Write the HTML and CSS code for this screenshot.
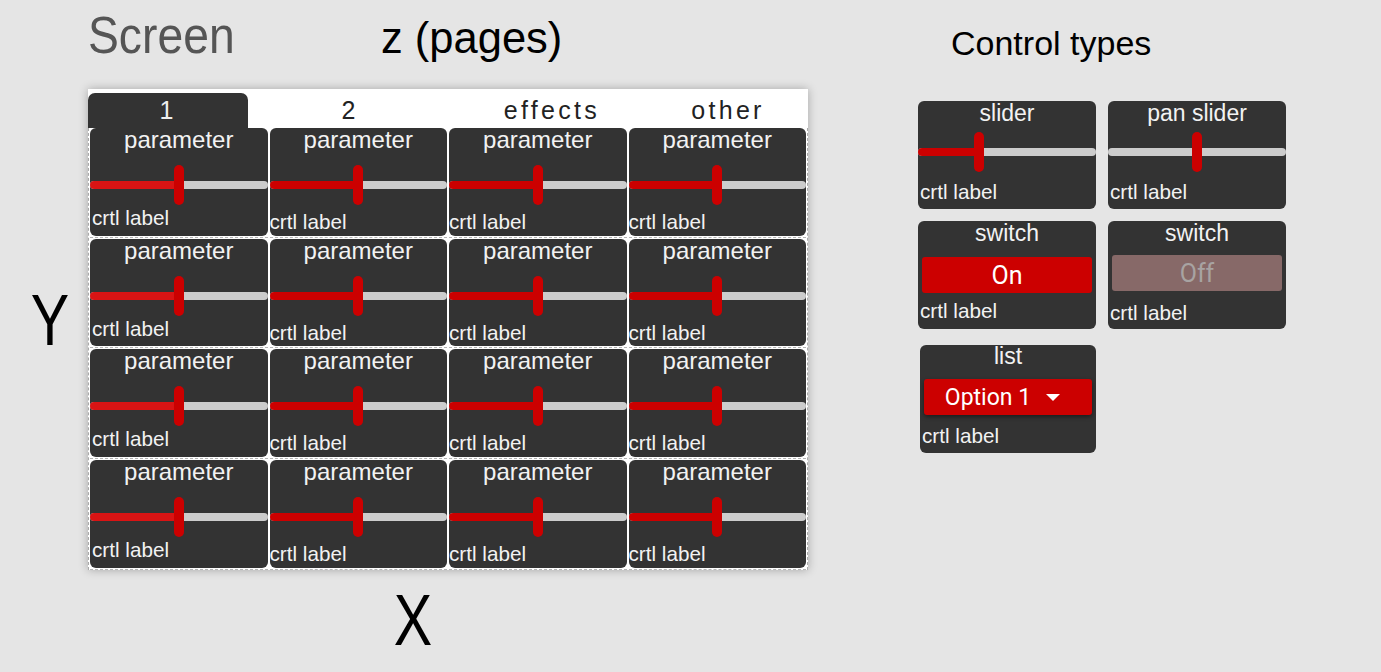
FILE: index.html
```html
<!DOCTYPE html>
<html lang="en">
<head>
    <meta charset="UTF-8">
    <meta name="viewport" content="width=device-width, initial-scale=1.0">
    <title>Screen layout</title>
    <link rel="stylesheet" href="styles.css">
</head>
<body>
<div class="page">
    <div class="diagram">
        <div class="head">
            <div class="screen-title">Screen</div>
            <div class="z-title">z (pages)</div>
        </div>
        <div class="axis-y">Y</div>
        <div class="panel">
            <div class="tabs">
                <div class="tab active tab-1">1</div>
                <div class="tab tab-2">2</div>
                <div class="tab tab-3">effects</div>
                <div class="tab tab-4">other</div>
            </div>
            <div class="grid">
                <!-- row 1 -->
                <div class="slot"><div class="ctl first">
                    <div class="ctl-title">parameter</div>
                    <div class="slider"><div class="track"><span class="fill hot" style="width:50%"></span></div><span class="thumb" style="left:50%"></span></div>
                    <div class="ctl-label">crtl label</div>
                </div></div>
                <div class="slot"><div class="ctl">
                    <div class="ctl-title">parameter</div>
                    <div class="slider"><div class="track"><span class="fill" style="width:50%"></span></div><span class="thumb" style="left:50%"></span></div>
                    <div class="ctl-label">crtl label</div>
                </div></div>
                <div class="slot"><div class="ctl">
                    <div class="ctl-title">parameter</div>
                    <div class="slider"><div class="track"><span class="fill" style="width:50%"></span></div><span class="thumb" style="left:50%"></span></div>
                    <div class="ctl-label">crtl label</div>
                </div></div>
                <div class="slot"><div class="ctl">
                    <div class="ctl-title">parameter</div>
                    <div class="slider"><div class="track"><span class="fill" style="width:50%"></span></div><span class="thumb" style="left:50%"></span></div>
                    <div class="ctl-label">crtl label</div>
                </div></div>
                <!-- row 2 -->
                <div class="slot"><div class="ctl first">
                    <div class="ctl-title">parameter</div>
                    <div class="slider"><div class="track"><span class="fill hot" style="width:50%"></span></div><span class="thumb" style="left:50%"></span></div>
                    <div class="ctl-label">crtl label</div>
                </div></div>
                <div class="slot"><div class="ctl">
                    <div class="ctl-title">parameter</div>
                    <div class="slider"><div class="track"><span class="fill" style="width:50%"></span></div><span class="thumb" style="left:50%"></span></div>
                    <div class="ctl-label">crtl label</div>
                </div></div>
                <div class="slot"><div class="ctl">
                    <div class="ctl-title">parameter</div>
                    <div class="slider"><div class="track"><span class="fill" style="width:50%"></span></div><span class="thumb" style="left:50%"></span></div>
                    <div class="ctl-label">crtl label</div>
                </div></div>
                <div class="slot"><div class="ctl">
                    <div class="ctl-title">parameter</div>
                    <div class="slider"><div class="track"><span class="fill" style="width:50%"></span></div><span class="thumb" style="left:50%"></span></div>
                    <div class="ctl-label">crtl label</div>
                </div></div>
                <!-- row 3 -->
                <div class="slot"><div class="ctl first">
                    <div class="ctl-title">parameter</div>
                    <div class="slider"><div class="track"><span class="fill hot" style="width:50%"></span></div><span class="thumb" style="left:50%"></span></div>
                    <div class="ctl-label">crtl label</div>
                </div></div>
                <div class="slot"><div class="ctl">
                    <div class="ctl-title">parameter</div>
                    <div class="slider"><div class="track"><span class="fill" style="width:50%"></span></div><span class="thumb" style="left:50%"></span></div>
                    <div class="ctl-label">crtl label</div>
                </div></div>
                <div class="slot"><div class="ctl">
                    <div class="ctl-title">parameter</div>
                    <div class="slider"><div class="track"><span class="fill" style="width:50%"></span></div><span class="thumb" style="left:50%"></span></div>
                    <div class="ctl-label">crtl label</div>
                </div></div>
                <div class="slot"><div class="ctl">
                    <div class="ctl-title">parameter</div>
                    <div class="slider"><div class="track"><span class="fill" style="width:50%"></span></div><span class="thumb" style="left:50%"></span></div>
                    <div class="ctl-label">crtl label</div>
                </div></div>
                <!-- row 4 -->
                <div class="slot"><div class="ctl first">
                    <div class="ctl-title">parameter</div>
                    <div class="slider"><div class="track"><span class="fill hot" style="width:50%"></span></div><span class="thumb" style="left:50%"></span></div>
                    <div class="ctl-label">crtl label</div>
                </div></div>
                <div class="slot"><div class="ctl">
                    <div class="ctl-title">parameter</div>
                    <div class="slider"><div class="track"><span class="fill" style="width:50%"></span></div><span class="thumb" style="left:50%"></span></div>
                    <div class="ctl-label">crtl label</div>
                </div></div>
                <div class="slot"><div class="ctl">
                    <div class="ctl-title">parameter</div>
                    <div class="slider"><div class="track"><span class="fill" style="width:50%"></span></div><span class="thumb" style="left:50%"></span></div>
                    <div class="ctl-label">crtl label</div>
                </div></div>
                <div class="slot"><div class="ctl">
                    <div class="ctl-title">parameter</div>
                    <div class="slider"><div class="track"><span class="fill" style="width:50%"></span></div><span class="thumb" style="left:50%"></span></div>
                    <div class="ctl-label">crtl label</div>
                </div></div>
            </div>
        </div>
        <div class="axis-x">X</div>
    </div>

    <div class="types">
        <h2 class="types-title">Control types</h2>
        <div class="type-grid">
            <div class="card card-slider">
                <div class="ctl-title">slider</div>
                <div class="slider"><div class="track"><span class="fill" style="width:34%"></span></div><span class="thumb" style="left:34%"></span></div>
                <div class="ctl-label">crtl label</div>
            </div>
            <div class="card card-slider">
                <div class="ctl-title">pan slider</div>
                <div class="slider"><div class="track"></div><span class="thumb" style="left:50%"></span></div>
                <div class="ctl-label">crtl label</div>
            </div>
            <div class="card card-on">
                <div class="ctl-title">switch</div>
                <div class="btn on">On</div>
                <div class="ctl-label">crtl label</div>
            </div>
            <div class="card card-off">
                <div class="ctl-title">switch</div>
                <div class="btn off">Off</div>
                <div class="ctl-label">crtl label</div>
            </div>
            <div class="card card-list">
                <div class="ctl-title">list</div>
                <div class="btn dropdown"><span>Option 1</span><span class="caret"></span></div>
                <div class="ctl-label">crtl label</div>
            </div>
        </div>
    </div>
</div>
</body>
</html>
```

FILE: styles.css
```css
body {
    margin: 0;
    background-color: #e5e5e5;
    font-family: "Liberation Sans", Arial, sans-serif;
    color: #000;
}
.page {
    display: flex;
    align-items: flex-start;
}

/* left: screen diagram */
.diagram {
    display: grid;
    grid-template-columns: 88px 720px;
    grid-template-rows: 89px 481px auto;
}
.head {
    grid-column: 2;
    display: flex;
    align-items: baseline;
    padding-top: 9px;
}
.screen-title {
    width: 293px;
    font-size: 52px;
    line-height: 52px;
    color: #555;
    transform: scaleX(0.89);
    transform-origin: left;
}
.z-title {
    font-size: 43.5px;
    line-height: 52px;
}
.axis-y {
    grid-column: 1;
    grid-row: 2;
    display: flex;
    align-items: center;
    justify-content: center;
    padding: 0 0 19px 10px;
    font-size: 72px;
    line-height: 1;
    transform: scaleX(0.8);
    transform-origin: 54px 50%;
}
.axis-x {
    grid-column: 2;
    grid-row: 3;
    padding: 14px 70px 0 0;
    text-align: center;
    font-size: 72px;
    line-height: 1;
    transform: scaleX(0.8);
    transform-origin: 325px 0;
}

.panel {
    grid-column: 2;
    grid-row: 2;
    display: flex;
    flex-direction: column;
    background: #fff;
    box-shadow: 0 0 9px rgba(0, 0, 0, 0.28);
}
.tabs {
    height: 39px;
    display: flex;
    align-items: flex-end;
}
.tab {
    height: 35px;
    line-height: 35px;
    text-align: center;
    font-size: 25px;
    letter-spacing: 3.3px;
    color: #222;
}
.tab.active {
    background: #333;
    color: #eee;
    border-radius: 7px 7px 0 0;
}
.tab-1 { width: 160px; }
.tab-2 { width: 204px; }
.tab-3 { width: 200px; }
.tab-4 { width: 156px; padding-right: 4px; box-sizing: border-box; }

.grid {
    flex: 1;
    display: grid;
    grid-template-columns: repeat(4, 1fr);
    grid-template-rows: repeat(4, 1fr);
    column-gap: 2px;
    padding: 0 1px;
    border-left: 1px dashed #aaa;
    border-right: 1px dashed #aaa;
}
.slot {
    display: flex;
    padding-bottom: 1px;
    border-bottom: 1px dashed #b5b5b5;
    margin-bottom: 1px;
}
.slot:nth-last-child(-n+4) {
    margin-bottom: 0;
}

/* controls */
.ctl, .card {
    flex: 1;
    display: flex;
    flex-direction: column;
    background: #333;
    border-radius: 6px;
    color: #f2f2f2;
}
.ctl-title {
    font-size: 23px;
    line-height: 24px;
    text-align: center;
}
.ctl .ctl-title {
    font-size: 24px;
}
.ctl-label {
    font-size: 20.7px;
    line-height: 22px;
    padding-left: 2px;
}
.ctl .slider { margin-top: 13px; }
.ctl .ctl-label {
    margin-top: 6px;
    padding-left: 0;
}
.ctl.first .ctl-label {
    margin-top: 2px;
    padding-left: 2px;
}

.slider {
    position: relative;
    height: 40px;
}
.track {
    position: absolute;
    left: 0;
    right: 0;
    top: 16px;
    height: 8px;
    border-radius: 4px;
    background: #ccc;
    overflow: hidden;
}
.fill {
    display: block;
    height: 100%;
    background: #c00;
}
.fill.hot {
    background: #d91414;
}
.thumb {
    position: absolute;
    top: 0;
    width: 10px;
    height: 40px;
    margin-left: -5px;
    border-radius: 5px;
    background: #c00;
}

/* right: control types */
.types {
    margin-left: 110px;
}
.types-title {
    margin: 0;
    height: 101px;
    padding: 26px 0 0 33px;
    box-sizing: border-box;
    font-size: 34px;
    line-height: 34px;
    font-weight: normal;
}
.type-grid {
    display: grid;
    grid-template-columns: 178px 178px;
    grid-auto-rows: 108px;
    gap: 12px;
    align-items: start;
}
.card {
    height: 108px;
}
.card-slider .slider { margin-top: 7px; }
.card-slider .ctl-label { margin-top: 9px; }

.btn {
    margin: 0 4px;
    height: 36px;
    border-radius: 3px;
    display: flex;
    align-items: center;
    justify-content: center;
    font-family: Roboto, "Liberation Sans", sans-serif;
    font-size: 25px;
}
.btn.on {
    margin-top: 12px;
    background: #c00;
    color: #fff;
}
.card-on .ctl-label { margin-top: 7px; }
.btn.off {
    margin-top: 10px;
    background: #876968;
    color: #a8a3a2;
}
.card-off .ctl-label { margin-top: 11px; }

.card-list {
    margin: 4px 0 0 2px;
}
.card-list .ctl-title { line-height: 22px; }
.btn.dropdown {
    margin-top: 12px;
    gap: 15px;
    padding-right: 11px;
    background: #c00;
    color: #fff;
    font-size: 23px;
    box-shadow: 0 2px 4px rgba(0, 0, 0, 0.45);
}
.caret {
    width: 0;
    height: 0;
    border-left: 7px solid transparent;
    border-right: 7px solid transparent;
    border-top: 7px solid #fff;
}
.card-list .ctl-label { margin-top: 10px; }
```
